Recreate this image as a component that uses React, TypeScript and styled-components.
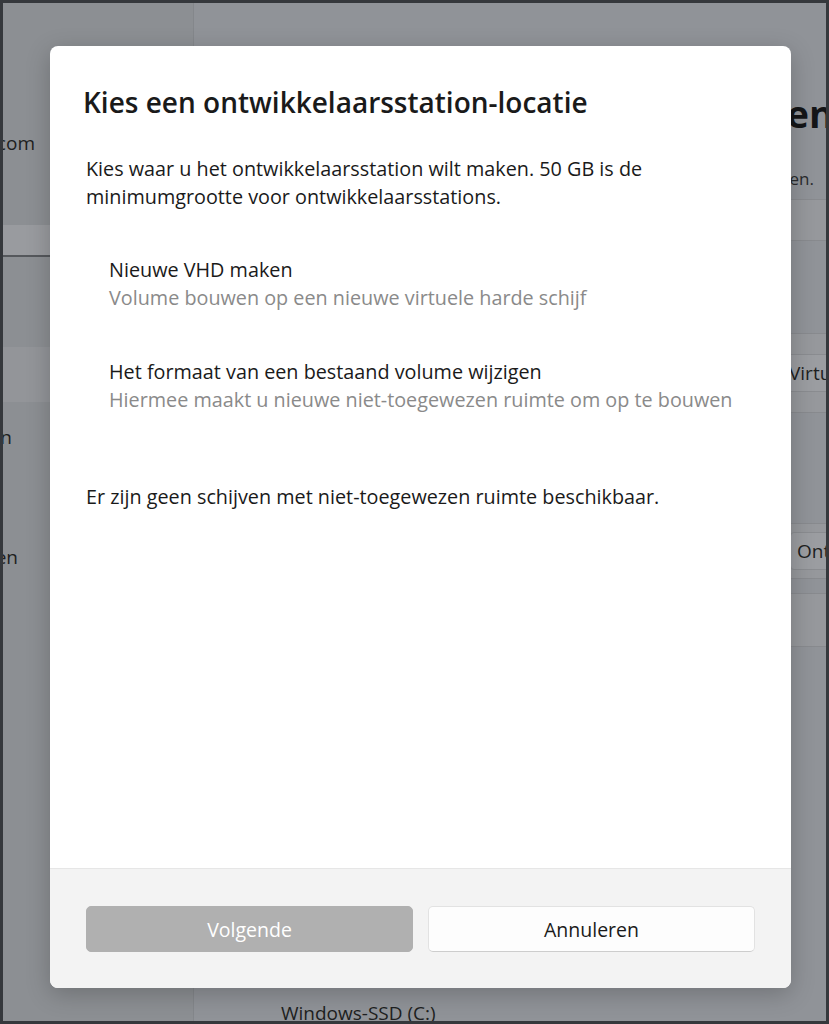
import styled, { createGlobalStyle } from "styled-components";

const Global = createGlobalStyle`
  html, body {
    margin: 0;
    padding: 0;
    background: #2e3034;
  }
  body {
    font-family: "Segoe UI", "Open Sans", "Noto Sans", sans-serif;
  }
`;

const Page = styled.div`
  position: relative;
  width: 829px;
  height: 1024px;
  overflow: hidden;
  box-sizing: border-box;
  border: 3px solid #35383c;
  display: flex;
  background: #8f9296;
  color: #1b1b1b;
`;

const Sidebar = styled.div`
  width: 190px;
  flex-shrink: 0;
  display: flex;
  flex-direction: column;
  overflow: hidden;
  background: #8c8f93;
  border-right: 1px solid #84878b;
`;

const Account = styled.div`
  height: 222px;
  box-sizing: border-box;
  padding: 126px 158px 0 0;
  display: flex;
  justify-content: flex-end;
  font-size: 19px;
  line-height: 28px;
  color: #1e1f21;
  white-space: nowrap;
`;

const Search = styled.div`
  height: 30px;
  background: #999b9f;
  border-bottom: 2px solid #55585c;
`;

const NavItem = styled.div<{ $active?: boolean; $h: number; $pad: number }>`
  height: ${(p) => p.$h}px;
  display: flex;
  align-items: center;
  justify-content: flex-end;
  padding-right: ${(p) => p.$pad}px;
  font-size: 19px;
  color: #1e1f21;
  white-space: nowrap;
  background: ${(p) => (p.$active ? "#939599" : "transparent")};
`;

const Main = styled.div`
  flex: 1;
  min-width: 0;
  display: flex;
  flex-direction: column;
  padding-left: 85px;
  background: #909398;
`;

const Heading = styled.div`
  margin: 88px -8px 0 0;
  display: flex;
  justify-content: flex-end;
  overflow: hidden;
  font-size: 38px;
  line-height: 44px;
  font-weight: 700;
  color: #141517;
  white-space: nowrap;
`;

const Sub = styled.div`
  margin: 32px 12px 0 0;
  display: flex;
  justify-content: flex-end;
  overflow: hidden;
  font-size: 17px;
  line-height: 24px;
  color: #2a2b2d;
  white-space: nowrap;
`;

const Card = styled.div<{ $h: number; $top: number }>`
  margin-top: ${(p) => p.$top}px;
  height: ${(p) => p.$h}px;
  background: #96989c;
  border-top: 1px solid #888a8e;
  border-bottom: 1px solid #888a8e;
  display: flex;
  align-items: center;
`;

const CardBtn = styled.div<{ $x: number }>`
  margin-left: ${(p) => p.$x}px;
  height: 36px;
  display: flex;
  align-items: center;
  padding-left: 6px;
  width: 120px;
  flex-shrink: 0;
  background: #9b9da1;
  border: 1px solid #8a8c90;
  border-radius: 4px;
  font-size: 19px;
  color: #1e1f21;
  white-space: nowrap;
`;

const Drive = styled.div`
  margin-top: auto;
  margin-bottom: -6px;
  font-size: 19px;
  line-height: 28px;
  color: #1e1f21;
  padding-left: 2px;
`;

const Dialog = styled.div`
  position: absolute;
  left: 47px;
  top: 43px;
  width: 741px;
  height: 942px;
  background: #ffffff;
  border-radius: 8px;
  box-shadow: 0 6px 24px rgba(0, 0, 0, 0.22);
  display: flex;
  flex-direction: column;
  overflow: hidden;
`;

const Content = styled.div`
  flex: 1;
  padding: 38px 36px 0 36px;
  display: flex;
  flex-direction: column;
`;

const Title = styled.h1`
  margin: 0 0 0 -3px;
  font-size: 28px;
  line-height: 36px;
  font-weight: 600;
  color: #1a1a1a;
`;

const Text = styled.p<{ $top: number }>`
  margin: ${(p) => p.$top}px 0 0 0;
  font-size: 19.8px;
  line-height: 28px;
  color: #1a1a1a;
`;

const Option = styled.div<{ $top: number }>`
  margin-top: ${(p) => p.$top}px;
  padding-left: 23px;
  display: flex;
  flex-direction: column;
`;

const OptTitle = styled.div`
  font-size: 19.8px;
  line-height: 28px;
  color: #1a1a1a;
`;

const OptDesc = styled.div`
  font-size: 19.8px;
  line-height: 28px;
  color: #8a8a8a;
`;

const Footer = styled.div`
  height: 120px;
  box-sizing: border-box;
  background: #f3f3f3;
  border-top: 1px solid #e6e6e6;
  padding: 37px 36px 0 36px;
  display: grid;
  grid-template-columns: 1fr 1fr;
  column-gap: 15px;
  align-items: start;
`;

const Button = styled.button<{ $primary?: boolean }>`
  height: 46px;
  border-radius: 5px;
  font-family: inherit;
  font-size: 19.5px;
  cursor: default;
  border: 1px solid ${(p) => (p.$primary ? "#b0b0b0" : "#e2e2e2")};
  border-bottom-color: ${(p) => (p.$primary ? "#b0b0b0" : "#cdcdcd")};
  background: ${(p) => (p.$primary ? "#b0b0b0" : "#fdfdfd")};
  color: ${(p) => (p.$primary ? "#ffffff" : "#1a1a1a")};
`;

export default function App() {
  return (
    <>
      <Global />
      <Page>
        <Sidebar>
          <Account>gebruiker@outlook.com</Account>
          <Search />
          <NavItem $h={90} $pad={152} />
          <NavItem $h={55} $pad={152} $active />
          <NavItem $h={70} $pad={181}>Bluetooth en apparaten</NavItem>
          <NavItem $h={50} $pad={152} />
          <NavItem $h={70} $pad={175}>Persoonlijke instellingen</NavItem>
        </Sidebar>
        <Main>
          <Heading>Systeem &gt; Opslag &gt; Schijven en volumes beheren</Heading>
          <Sub>Schijven en volumes weergeven en beheren.</Sub>
          <Card $h={40} $top={8} />
          <Card $h={78} $top={92}>
            <CardBtn $x={503}>Virtuele harde schijf</CardBtn>
          </Card>
          <Card $h={54} $top={110}>
            <CardBtn $x={511}>Ontkoppelen</CardBtn>
          </Card>
          <Card $h={52} $top={14} />
          <Drive>Windows-SSD (C:)</Drive>
        </Main>
        <Dialog>
          <Content>
            <Title>Kies een ontwikkelaarsstation-locatie</Title>
            <Text $top={35}>
              Kies waar u het ontwikkelaarsstation wilt maken. 50 GB is de
              <br />
              minimumgrootte voor ontwikkelaarsstations.
            </Text>
            <Option $top={45}>
              <OptTitle>Nieuwe VHD maken</OptTitle>
              <OptDesc>Volume bouwen op een nieuwe virtuele harde schijf</OptDesc>
            </Option>
            <Option $top={46}>
              <OptTitle>Het formaat van een bestaand volume wijzigen</OptTitle>
              <OptDesc>
                Hiermee maakt u nieuwe niet-toegewezen ruimte om op te bouwen
              </OptDesc>
            </Option>
            <Text $top={69}>
              Er zijn geen schijven met niet-toegewezen ruimte beschikbaar.
            </Text>
          </Content>
          <Footer>
            <Button $primary>Volgende</Button>
            <Button>Annuleren</Button>
          </Footer>
        </Dialog>
      </Page>
    </>
  );
}
